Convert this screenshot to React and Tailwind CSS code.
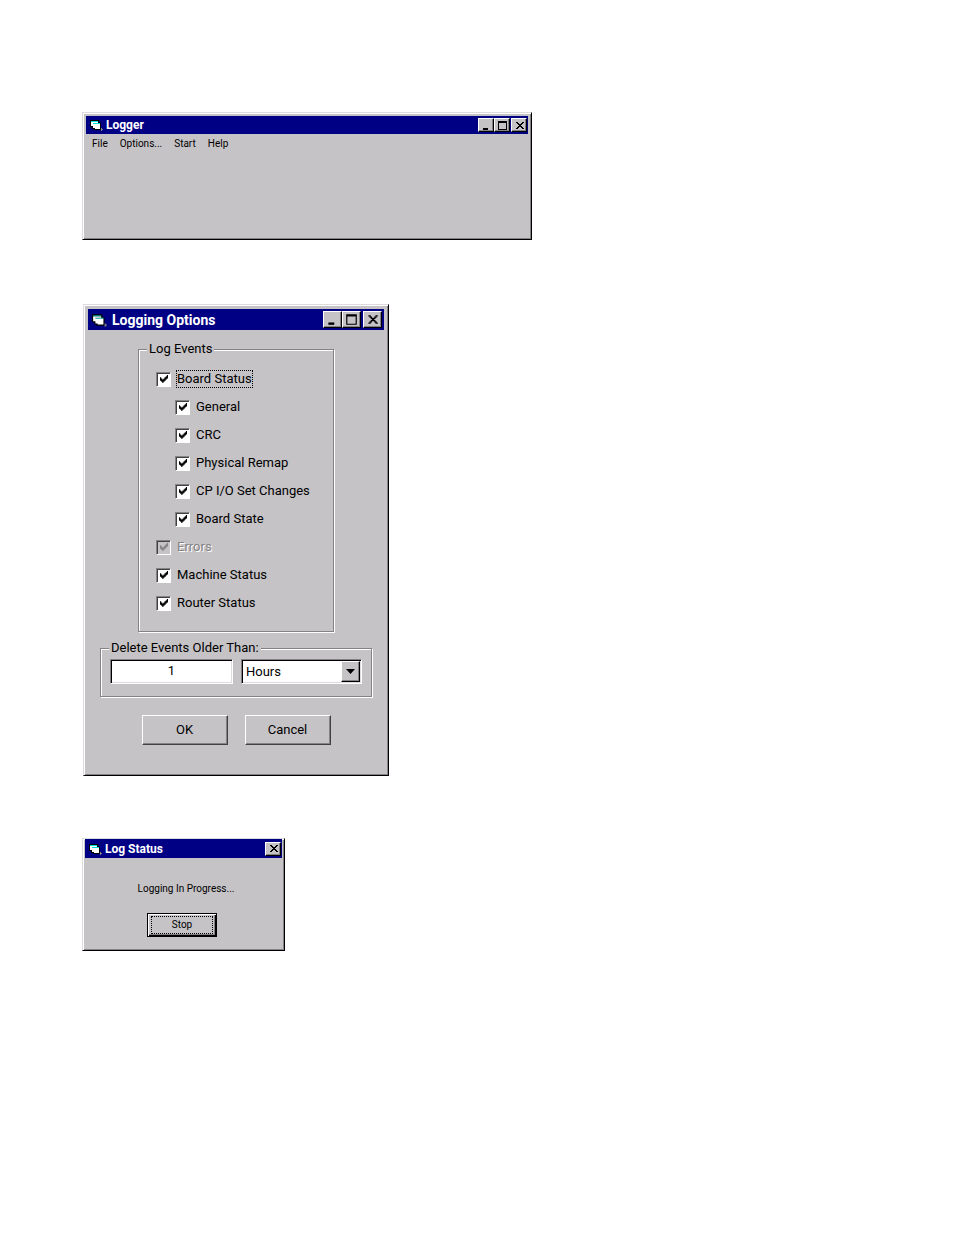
import React, { useState } from "react";
import clsx from "clsx";

const childEvents = [
  { id: "general", label: "General" },
  { id: "crc", label: "CRC" },
  { id: "remap", label: "Physical Remap" },
  { id: "cpio", label: "CP I/O Set Changes" },
  { id: "state", label: "Board State" },
];

const logEvents = [
  { id: "board", label: "Board Status", focused: true },
  ...childEvents.map((item) => ({ ...item, nested: true })),
  { id: "errors", label: "Errors", disabled: true },
  { id: "machine", label: "Machine Status" },
  { id: "router", label: "Router Status" },
];

const FormIcon = ({ large }) => (
  <svg
    viewBox="0 0 14 12"
    className={clsx("shrink-0", large ? "w-4 h-[14px]" : "w-[14px] h-3")}
    shapeRendering={large ? "auto" : "crispEdges"}
    aria-hidden="true"
  >
    <path d="M0 1h9v2h1v1h1v7H4v-1H2V8H0z" fill="#000" />
    <path d="M1 2h7v1H1zM3 4h7v1H3z" fill="#00dfe0" />
    <path d="M1 3h7v1H3v1h7v5H5V9H3V7H1z" fill="#fff" />
    <path d="M11 9h1v1h1v1h-1v1h-1z" fill="#848284" />
  </svg>
);

const glyphs = {
  Minimize: <path d="M2 8h5v2H2z" />,
  Maximize: <path fillRule="evenodd" d="M1 1h9v9H1zM2 3v6h7V3z" />,
  Close: (
    <path d="M2 2h2v1h1v1h2V3h1V2h2v1H9v1H8v1H7v1h1v1h1v1h1v1H8V8H7V7H5v1H4v1H2V8h1V7h1V6h1V5H4V4H3V3H2z" />
  ),
};

const CaptionButton = ({ name, large }) => (
  <button
    type="button"
    aria-label={name}
    className={clsx(
      "flex items-center justify-center bg-[#c6c3c6] border border-t-white border-l-white border-r-black border-b-black shadow-[inset_-1px_-1px_0_#848284]",
      large ? "w-[19px] h-[17px]" : "w-4 h-[14px]"
    )}
  >
    <svg
      viewBox="0 0 11 11"
      className={clsx("shrink-0", large ? "w-[13px] h-[13px]" : "w-[11px] h-[11px]")}
      shapeRendering={large ? "auto" : "crispEdges"}
    >
      {glyphs[name]}
    </svg>
  </button>
);

const Window = ({ title, large, dialog, className, children }) => (
  <section
    aria-label={title}
    className={clsx(
      "w-full bg-[#c6c3c6] border border-t-[#dedbde] border-l-[#dedbde] border-r-black border-b-black shadow-[inset_1px_1px_0_#fff,inset_-1px_-1px_0_#848284]",
      large ? "p-1" : dialog ? "px-0.5 pb-0.5" : "p-[3px]",
      className
    )}
  >
    <header
      className={clsx(
        "flex items-center bg-[#000084] text-white",
        large ? "h-[21px] pl-1 pr-0.5" : "pl-1 pr-px",
        !large && (dialog ? "h-[19px]" : "h-[18px]")
      )}
    >
      <FormIcon large={large} />
      <h2
        className={clsx(
          "flex-1 font-bold whitespace-nowrap",
          large ? "pl-1 text-[14px] leading-5" : "pl-0.5 text-[12px] leading-4"
        )}
      >
        {title}
      </h2>
      {!dialog && <CaptionButton name="Minimize" large={large} />}
      {!dialog && <CaptionButton name="Maximize" large={large} />}
      <div className={clsx("flex", large ? "ml-0.5" : "ml-px")}>
        <CaptionButton name="Close" large={large} />
      </div>
    </header>
    {children}
  </section>
);

const Group = ({ title, className, children }) => (
  <fieldset
    className={clsx(
      "border border-[#848284] shadow-[1px_1px_0_#fff,inset_1px_1px_0_#fff]",
      className
    )}
  >
    <legend className="bg-[#c6c3c6] px-0.5 ml-2 leading-4">{title}</legend>
    {children}
  </fieldset>
);

const CheckRow = ({ item, checked, onToggle }) => (
  <div className={clsx("flex items-center h-7", item.nested && "pl-[19px]")}>
    <span className="relative flex">
      <input
        type="checkbox"
        id={item.id}
        checked={checked}
        disabled={item.disabled}
        onChange={() => onToggle(item.id)}
        className="appearance-none w-[15px] h-[15px] bg-white disabled:bg-[#c6c3c6] border border-t-[#848284] border-l-[#848284] border-r-white border-b-white shadow-[inset_1px_1px_0_#424142]"
      />
      {checked && (
        <svg
          viewBox="0 0 7 7"
          className="absolute left-1 top-[3px] w-2 h-2 pointer-events-none"
          fill={item.disabled ? "#848284" : "#000"}
        >
          <path d="M0 2h1v1h1v1h1V3h1V2h1V1h1V0h1v3H6v1H5v1H4v1H3v1H2V6H1V5H0z" />
        </svg>
      )}
    </span>
    <label
      htmlFor={item.id}
      className={clsx(
        "ml-[5px] leading-4 border border-dotted whitespace-nowrap",
        item.focused ? "border-black" : "border-transparent",
        item.disabled && "text-[#848284] [text-shadow:1px_1px_0_#fff]"
      )}
    >
      {item.label}
    </label>
  </div>
);

const PushButton = ({ children }) => (
  <button
    type="button"
    className="w-[86px] h-[30px] bg-[#c6c3c6] border border-t-white border-l-white border-r-[#424142] border-b-[#424142] shadow-[inset_-1px_-1px_0_#848284]"
  >
    {children}
  </button>
);

const LoggerWindow = () => (
  <Window title="Logger" className="max-w-[450px]">
    <nav className="flex h-5 text-[10px] leading-5">
      {["File", "Options...", "Start", "Help"].map((item) => (
        <button key={item} type="button" className="px-1.5">
          {item}
        </button>
      ))}
    </nav>
    <div className="h-[82px]" />
  </Window>
);

const OptionsWindow = () => {
  const [checked, setChecked] = useState(() =>
    Object.fromEntries(logEvents.map((item) => [item.id, true]))
  );
  const [age, setAge] = useState("1");
  const [unit, setUnit] = useState("Hours");

  const toggle = (id) => setChecked((prev) => ({ ...prev, [id]: !prev[id] }));

  return (
    <Window title="Logging Options" large className="max-w-[306px] ml-px">
      <form
        onSubmit={(e) => e.preventDefault()}
        className="flex flex-col items-center pt-[11px] pb-[26px] text-[13px]"
      >
        <Group title="Log Events" className="w-[196px] pt-2 pb-[14px]">
          <div className="pl-[17px]">
            {logEvents.map((item) => (
              <CheckRow
                key={item.id}
                item={item}
                checked={checked[item.id]}
                onToggle={toggle}
              />
            ))}
          </div>
        </Group>

        <Group title="Delete Events Older Than:" className="w-[272px] mt-2 pt-[3px] pb-3">
          <div className="flex gap-2 px-[9px]">
            <input
              type="text"
              aria-label="Age"
              value={age}
              onChange={(e) => setAge(e.target.value)}
              className="w-0 flex-1 h-[25px] pb-0.5 bg-white text-center border border-t-[#848284] border-l-[#848284] border-r-white border-b-white shadow-[inset_1px_1px_0_#000,inset_-1px_-1px_0_#dedbde]"
            />
            <div className="relative w-0 flex-1">
              <select
                aria-label="Unit"
                value={unit}
                onChange={(e) => setUnit(e.target.value)}
                className="appearance-none w-full h-[25px] pl-1 bg-white border border-t-[#848284] border-l-[#848284] border-r-white border-b-white shadow-[inset_1px_1px_0_#000,inset_-1px_-1px_0_#dedbde]"
              >
                <option>Hours</option>
                <option>Days</option>
              </select>
              <span className="absolute right-0.5 top-0.5 w-[19px] h-[21px] flex items-center justify-center pointer-events-none bg-[#c6c3c6] border border-t-white border-l-white border-r-black border-b-black shadow-[inset_-1px_-1px_0_#848284]">
                <svg viewBox="0 0 9 5" className="w-[9px] h-[5px]">
                  <path d="M0 0h9L4.500 5z" />
                </svg>
              </span>
            </div>
          </div>
        </Group>

        <div className="flex gap-[17px] mt-[18px]">
          <PushButton>OK</PushButton>
          <PushButton>Cancel</PushButton>
        </div>
      </form>
    </Window>
  );
};

const StatusWindow = () => (
  <Window title="Log Status" dialog className="max-w-[203px]">
    <div className="flex flex-col items-center pt-[23px] pb-[11px] pr-[3px] text-[10px]">
      <p className="pl-2 leading-4">Logging In Progress...</p>
      <button
        type="button"
        className="mt-4 w-[70px] h-6 p-0.5 bg-[#c6c3c6] border border-black shadow-[inset_1px_1px_0_#fff,inset_-1px_-1px_0_#000,inset_-2px_-2px_0_#848284]"
      >
        <span className="flex items-center justify-center h-full mx-px border border-dotted border-black leading-4">
          Stop
        </span>
      </button>
    </div>
  </Window>
);

export default function App() {
  return (
    <main className="min-h-screen bg-white text-black pl-[82px] pr-4 pt-28 pb-16 flex flex-col items-start font-[Roboto,'Liberation_Sans',sans-serif]">
      <LoggerWindow />
      <div className="w-full mt-16">
        <OptionsWindow />
      </div>
      <div className="w-full mt-[62px]">
        <StatusWindow />
      </div>
    </main>
  );
}
